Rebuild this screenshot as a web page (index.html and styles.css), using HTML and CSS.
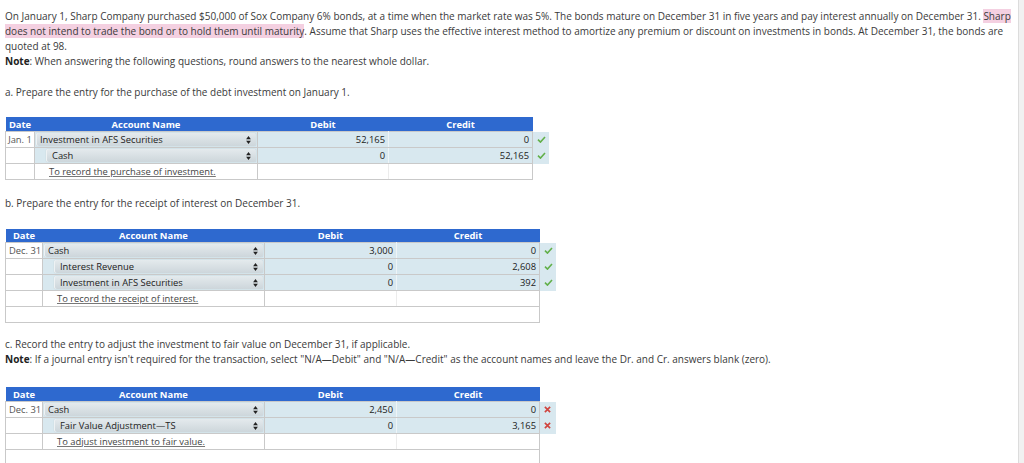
FILE: index.html
```html
<!DOCTYPE html>
<html lang="en">
<head>
<meta charset="utf-8">
<title>Debt investment entries</title>
<link rel="stylesheet" href="styles.css">
</head>
<body>
<div class="page">
  <main class="content">
    <p class="para">On January 1, Sharp Company purchased $50,000 of Sox Company 6% bonds, at a time when the market rate was 5%. The bonds mature on December 31 in five years and pay interest annually on December 31. <mark>Sharp does not intend to trade the bond or to hold them until maturity</mark>. Assume that Sharp uses the effective interest method to amortize any premium or discount on investments in bonds. At December 31, the bonds are quoted at 98.</p>
    <p class="para"><b>Note</b>: When answering the following questions, round answers to the nearest whole dollar.</p>

    <p class="para part-a">a. Prepare the entry for the purchase of the debt investment on January 1.</p>
    <table class="je je-a">
      <thead>
        <tr><th class="c-date">Date</th><th class="c-acct">Account Name</th><th class="c-num">Debit</th><th class="c-num c-cr">Credit</th><th class="c-mark"></th></tr>
      </thead>
      <tbody>
        <tr class="line">
          <td class="date">Jan. 1</td>
          <td class="acct"><div class="select">Investment in AFS Securities<svg class="arrows" viewBox="0 0 6 10" width="5" height="8"><path d="M3 0L6 4H0z M3 10L0 6H6z" fill="#222"/></svg></div></td>
          <td class="num">52,165</td><td class="num cr">0</td>
          <td class="mark"><svg class="ok" viewBox="0 0 10 8" width="9" height="7"><path d="M1 4.2L3.8 7L9 1.2" fill="none" stroke="#62b04a" stroke-width="1.8"/></svg></td>
        </tr>
        <tr class="line">
          <td class="date"></td>
          <td class="acct"><div class="select indent">Cash<svg class="arrows" viewBox="0 0 6 10" width="5" height="8"><path d="M3 0L6 4H0z M3 10L0 6H6z" fill="#222"/></svg></div></td>
          <td class="num">0</td><td class="num cr">52,165</td>
          <td class="mark"><svg class="ok" viewBox="0 0 10 8" width="9" height="7"><path d="M1 4.2L3.8 7L9 1.2" fill="none" stroke="#62b04a" stroke-width="1.8"/></svg></td>
        </tr>
        <tr class="memo">
          <td class="date"></td>
          <td class="acct"><span class="memo-text">To record the purchase of investment.</span></td>
          <td class="num"></td><td class="num cr"></td><td class="mark"></td>
        </tr>
      </tbody>
    </table>

    <p class="para part-b">b. Prepare the entry for the receipt of interest on December 31.</p>
    <table class="je je-b">
      <thead>
        <tr><th class="c-date">Date</th><th class="c-acct">Account Name</th><th class="c-num">Debit</th><th class="c-num c-cr">Credit</th><th class="c-mark"></th></tr>
      </thead>
      <tbody>
        <tr class="line">
          <td class="date">Dec. 31</td>
          <td class="acct"><div class="select">Cash<svg class="arrows" viewBox="0 0 6 10" width="5" height="8"><path d="M3 0L6 4H0z M3 10L0 6H6z" fill="#222"/></svg></div></td>
          <td class="num">3,000</td><td class="num cr">0</td>
          <td class="mark"><svg class="ok" viewBox="0 0 10 8" width="9" height="7"><path d="M1 4.2L3.8 7L9 1.2" fill="none" stroke="#62b04a" stroke-width="1.8"/></svg></td>
        </tr>
        <tr class="line">
          <td class="date"></td>
          <td class="acct"><div class="select indent">Interest Revenue<svg class="arrows" viewBox="0 0 6 10" width="5" height="8"><path d="M3 0L6 4H0z M3 10L0 6H6z" fill="#222"/></svg></div></td>
          <td class="num">0</td><td class="num cr">2,608</td>
          <td class="mark"><svg class="ok" viewBox="0 0 10 8" width="9" height="7"><path d="M1 4.2L3.8 7L9 1.2" fill="none" stroke="#62b04a" stroke-width="1.8"/></svg></td>
        </tr>
        <tr class="line">
          <td class="date"></td>
          <td class="acct"><div class="select indent">Investment in AFS Securities<svg class="arrows" viewBox="0 0 6 10" width="5" height="8"><path d="M3 0L6 4H0z M3 10L0 6H6z" fill="#222"/></svg></div></td>
          <td class="num">0</td><td class="num cr">392</td>
          <td class="mark"><svg class="ok" viewBox="0 0 10 8" width="9" height="7"><path d="M1 4.2L3.8 7L9 1.2" fill="none" stroke="#62b04a" stroke-width="1.8"/></svg></td>
        </tr>
        <tr class="memo">
          <td class="date"></td>
          <td class="acct"><span class="memo-text">To record the receipt of interest.</span></td>
          <td class="num"></td><td class="num cr"></td><td class="mark"></td>
        </tr>
        <tr class="blank"><td colspan="4"></td><td class="mark"></td></tr>
      </tbody>
    </table>

    <p class="para part-c">c. Record the entry to adjust the investment to fair value on December 31, if applicable.</p>
    <p class="para"><b>Note</b>: If a journal entry isn't required for the transaction, select "N/A—Debit" and "N/A—Credit" as the account names and leave the Dr. and Cr. answers blank (zero).</p>
    <table class="je je-c">
      <thead>
        <tr><th class="c-date">Date</th><th class="c-acct">Account Name</th><th class="c-num">Debit</th><th class="c-num c-cr">Credit</th><th class="c-mark"></th></tr>
      </thead>
      <tbody>
        <tr class="line">
          <td class="date">Dec. 31</td>
          <td class="acct"><div class="select">Cash<svg class="arrows" viewBox="0 0 6 10" width="5" height="8"><path d="M3 0L6 4H0z M3 10L0 6H6z" fill="#222"/></svg></div></td>
          <td class="num">2,450</td><td class="num cr">0</td>
          <td class="mark"><svg class="bad" viewBox="0 0 8 8" width="7" height="7"><path d="M1 1L7 7M7 1L1 7" stroke="#d0453f" stroke-width="1.9"/></svg></td>
        </tr>
        <tr class="line">
          <td class="date"></td>
          <td class="acct"><div class="select indent">Fair Value Adjustment—TS<svg class="arrows" viewBox="0 0 6 10" width="5" height="8"><path d="M3 0L6 4H0z M3 10L0 6H6z" fill="#222"/></svg></div></td>
          <td class="num">0</td><td class="num cr">3,165</td>
          <td class="mark"><svg class="bad" viewBox="0 0 8 8" width="7" height="7"><path d="M1 1L7 7M7 1L1 7" stroke="#d0453f" stroke-width="1.9"/></svg></td>
        </tr>
        <tr class="memo">
          <td class="date"></td>
          <td class="acct"><span class="memo-text">To adjust investment to fair value.</span></td>
          <td class="num"></td><td class="num cr"></td><td class="mark"></td>
        </tr>
        <tr class="blank"><td colspan="4"></td><td class="mark"></td></tr>
      </tbody>
    </table>
  </main>
  <div class="gutter"></div>
</div>
</body>
</html>
```

FILE: styles.css
```css
html, body {
  margin: 0;
  padding: 0;
  background: #fff;
  overflow: hidden;
}

body {
  font-family: "Open Sans", "Liberation Sans", sans-serif;
  font-size: 9.4px;
  line-height: 15px;
  color: #333;
}

.page {
  display: flex;
  min-height: 100vh;
}

.content {
  flex: 1;
  padding: 9px 4px 0 5px;
}

.gutter {
  width: 5px;
  border-left: 1px solid #dcdcdc;
  background: #f1f1f1;
}

.para {
  margin: 0;
  font-size: 10px;
  line-height: 15px;
  color: #3a3a3a;
}

.para b {
  font-weight: 700;
  color: #222;
}

mark {
  background: #f4d0e1;
  color: inherit;
}

.part-a {
  margin-top: 16px;
  margin-bottom: 17px;
}

.part-b {
  margin-top: 16px;
  margin-bottom: 18px;
}

.part-c {
  margin-top: 14px;
}

.je-c {
  margin-top: 20px;
}

/* journal entry table */
.je {
  border-collapse: collapse;
  table-layout: fixed;
}

.je th {
  background: #2e69cf;
  color: #fff;
  font-weight: 700;
  height: 13px;
  line-height: 13px;
  padding: 0;
  text-align: center;
  border: 0;
}

.je-a th, .je-c th {
  height: 14px;
}

.je th.c-mark {
  background: transparent;
}

.je-a .c-date { width: 29px; }
.je-a .c-acct { width: 223px; }
.je-a .c-num { width: 131px; }
.je-a .c-cr { width: 144px; }

.je-b .c-date, .je-c .c-date { width: 37px; }
.je-b .c-acct, .je-c .c-acct { width: 222px; }
.je-b .c-num, .je-c .c-num { width: 132px; }
.je-b .c-cr, .je-c .c-cr { width: 143px; }

.c-mark { width: 16px; }

.je td {
  padding: 0;
  height: 14px;
  border: 1px solid #c9c9c9;
  white-space: nowrap;
}

.je-b td {
  height: 15px;
}

.je td.mark {
  border: 0;
  padding-left: 4px;
  background: transparent;
}

.je .line td {
  background: #d8e8ef;
}

.je .line td.date {
  background: #fff;
  color: #555;
  text-align: center;
}

.je-b .line td.date, .je-c .line td.date {
  text-align: left;
  padding-left: 3px;
}

.je td.num {
  text-align: right;
  padding-right: 3px;
  color: #222;
}

.je .line td.num {
  border-right-color: #eef4f7;
}

.je .line td.cr {
  border-right-color: #c9c9c9;
}

.je .memo td {
  background: #fff;
}

.je .memo td.num {
  border-right-color: #ececec;
}

.je .memo td.cr {
  border-right-color: #c9c9c9;
}

.select {
  display: flex;
  align-items: center;
  justify-content: space-between;
  height: 13px;
  margin: 0 1px 0 1px;
  padding: 0 5px 0 4px;
  border-radius: 2px;
  background: linear-gradient(#e4eaed, #cdd6db);
  box-shadow: inset 1px 0 0 #eef2f4, 0 0 1px #aab4ba;
  color: #222;
}

.select.indent {
  margin-left: 11px;
  padding-left: 6px;
}

.arrows {
  display: block;
  flex: none;
}

.memo-text {
  display: inline-block;
  margin-left: 14px;
  color: #444;
  text-decoration: underline;
  text-decoration-color: #777;
  text-underline-offset: 1px;
}

.ok, .bad {
  display: block;
}
```
